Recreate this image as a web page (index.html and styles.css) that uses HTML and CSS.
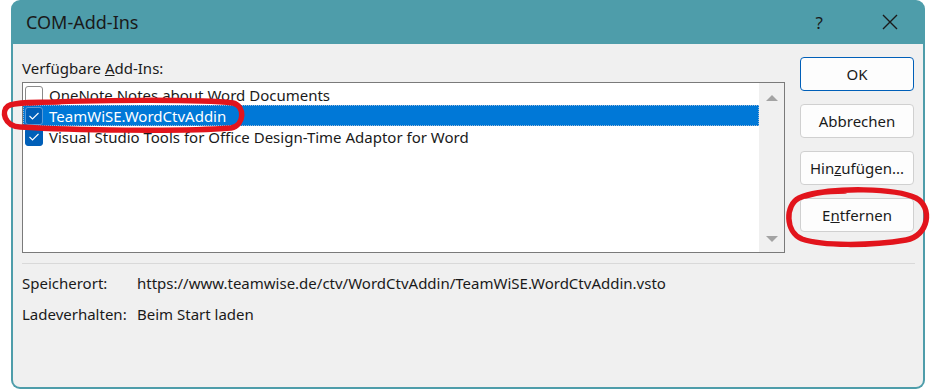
FILE: index.html
```html
<!DOCTYPE html>
<html lang="de">
<head>
  <meta charset="UTF-8" />
  <title>COM-Add-Ins</title>
  <link rel="stylesheet" href="styles.css">
</head>
<body>
  <div class="window">
    <div class="titlebar">
      <span class="title">COM-Add-Ins</span>
      <span class="help">?</span>
      <svg class="close" width="16" height="16" viewBox="0 0 16 16">
        <path d="M1 1 L15 15 M15 1 L1 15" stroke="#1a1a1a" stroke-width="1.4" fill="none" />
      </svg>
    </div>

    <div class="client">
      <div class="main">
        <div class="left">
          <div class="list-label">Verfügbare <u>A</u>dd-Ins:</div>
          <div class="listbox">
            <div class="items">
              <div class="item">
                <span class="box"></span>
                <span>OneNote Notes about Word Documents</span>
              </div>
              <div class="item selected">
                <span class="box checked">
                  <svg width="12" height="10" viewBox="0 0 12 10"><path d="M1.5 5 L4.5 8 L10.5 2" stroke="#fff" stroke-width="1.1" fill="none" /></svg>
                </span>
                <span>TeamWiSE.WordCtvAddin</span>
              </div>
              <div class="item">
                <span class="box checked">
                  <svg width="12" height="10" viewBox="0 0 12 10"><path d="M1.5 5 L4.5 8 L10.5 2" stroke="#fff" stroke-width="1.1" fill="none" /></svg>
                </span>
                <span>Visual Studio Tools for Office Design-Time Adaptor for Word</span>
              </div>
            </div>
            <div class="scrollbar">
              <span class="arrow up"></span>
              <span class="arrow down"></span>
            </div>
          </div>
        </div>

        <div class="buttons">
          <button class="btn default">OK</button>
          <button class="btn">Abbrechen</button>
          <button class="btn">Hin<u>z</u>ufügen...</button>
          <button class="btn">E<u>n</u>tfernen</button>
        </div>
      </div>

      <div class="separator"></div>

      <div class="info">
        <div class="info-row">
          <span class="info-key">Speicherort:</span>
          <span>https://www.teamwise.de/ctv/WordCtvAddin/TeamWiSE.WordCtvAddin.vsto</span>
        </div>
        <div class="info-row">
          <span class="info-key">Ladeverhalten:</span>
          <span>Beim Start laden</span>
        </div>
      </div>
    </div>

    <!-- red marker annotations drawn over the dialog -->
    <svg class="marks" width="934" height="390" viewBox="0 0 934 390">
      <path d="M30 103 C 90 100, 200 99, 233 103 C 245 106, 245 125, 231 128 C 180 132, 70 130, 20 127 C 4 126, 1 111, 8 106 C 14 102, 40 102, 60 102"
            stroke="#e2141c" stroke-width="5.5" fill="none" stroke-linecap="round" />
      <path d="M805 196 C 835 187, 895 188, 916 198 C 933 207, 929 236, 906 240 C 870 246, 822 246, 802 239 C 785 232, 785 205, 799 198 C 810 193, 828 191, 845 191"
            stroke="#e2141c" stroke-width="5.5" fill="none" stroke-linecap="round" />
    </svg>
  </div>
</body>
</html>
```

FILE: styles.css
```css
* {
  box-sizing: border-box;
}

body {
  margin: 0;
  background: #ffffff;
  font-family: 'Noto Sans', sans-serif;
  color: #1a1a1a;
}

.window {
  position: relative;
  margin-left: 11px;
  width: 914px;
  height: 389px;
  background: #4e9daa;
  border-radius: 9px;
  padding: 0 2px 2px 2px;
  display: flex;
  flex-direction: column;
}

.titlebar {
  height: 44px;
  display: flex;
  align-items: center;
  padding-left: 13px;
}

.title {
  font-size: 18px;
  flex: 1;
}

.help {
  font-size: 17px;
  margin-right: 59px;
}

.close {
  margin-right: 25px;
}

.client {
  flex: 1;
  background: #f0f0f0;
  border-radius: 0 0 7px 7px;
  padding: 13px 9px 0 9px;
  font-size: 15px;
}

.main {
  display: flex;
  gap: 15px;
}

.left {
  width: 763px;
}

.list-label {
  height: 25px;
  line-height: 22px;
}

.listbox {
  height: 171px;
  border: 1px solid #7a7a7a;
  background: #ffffff;
  display: flex;
  padding-top: 1px;
}

.items {
  flex: 1;
}

.item {
  height: 21px;
  display: flex;
  align-items: center;
  gap: 6px;
  padding-left: 2px;
  white-space: nowrap;
}

.item.selected {
  background: #0078d7;
  color: #ffffff;
  outline: 1px dotted #9ab8d8;
  outline-offset: -1px;
}

.box {
  width: 18px;
  height: 18px;
  border: 1px solid #8a8a8a;
  border-radius: 3px;
  background: #ffffff;
  display: flex;
  align-items: center;
  justify-content: center;
}

.box.checked {
  background: #005fb8;
  border-color: #005fb8;
}

.selected .box.checked {
  border-color: #5a9bd8;
}

.scrollbar {
  width: 25px;
  background: #f0f0f0;
  margin-top: -1px;
  display: flex;
  flex-direction: column;
  justify-content: space-between;
  align-items: center;
  padding: 12px 0 10px 0;
}

.arrow {
  width: 0;
  height: 0;
  border-left: 6px solid transparent;
  border-right: 6px solid transparent;
}

.arrow.up {
  border-bottom: 6px solid #a3a3a3;
}

.arrow.down {
  border-top: 6px solid #a3a3a3;
}

.buttons {
  width: 114px;
  display: flex;
  flex-direction: column;
  gap: 13px;
}

.btn {
  height: 34px;
  background: #fdfdfd;
  border: 1px solid #d0d0d0;
  border-radius: 4px;
  font-family: 'Noto Sans', sans-serif;
  font-size: 15px;
  color: #1a1a1a;
  padding: 0;
}

.btn.default {
  border-color: #005fb8;
}

.separator {
  height: 1px;
  background: #d9d9d9;
  margin: 10px 0 0 0;
  width: 893px;
}

.info {
  padding-top: 3px;
}

.info-row {
  display: flex;
  height: 31px;
  align-items: center;
}

.info-key {
  width: 115px;
}

.marks {
  position: absolute;
  left: -11px;
  top: 0;
  pointer-events: none;
}
```
